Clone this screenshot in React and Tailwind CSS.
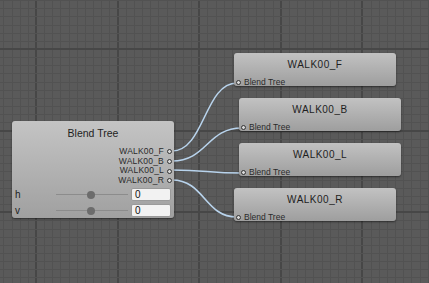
import React from 'react';

const W = 429;
const H = 283;
const STEP = 8.16;

const Grid = () => {
  const lines = [];
  for (let k = -5; k * STEP + 36 < W + 10; k++) {
    const x = Math.round(36 + k * STEP);
    const major = ((k % 10) + 10) % 10 === 0;
    lines.push(<rect key={'v' + k} x={major ? x - 1 : x} y={0} width={major ? 2 : 1} height={H} fill={major ? '#474747' : '#525252'} />);
  }
  for (let k = -7; k * STEP + 49 < H + 10; k++) {
    const y = Math.round(49 + k * STEP);
    const major = ((k % 10) + 10) % 10 === 0;
    lines.push(<rect key={'h' + k} x={0} y={major ? y - 1 : y} width={W} height={major ? 2 : 1} fill={major ? '#474747' : '#525252'} />);
  }
  return lines;
};

const edges = [
  [172, 151, 237, 83],
  [172, 161, 242, 128],
  [172, 170, 242, 173],
  [172, 180, 237, 217],
];

const Port = () => (
  <span className="inline-block w-[5px] h-[5px] rounded-full border border-[#333] bg-[#d8d8d8]" />
);

const ClipNode = ({ name, left, top }) => (
  <div
    className="absolute w-[162px] h-[33px] rounded-[3px] bg-gradient-to-b from-[#c2c2c2] to-[#9e9e9e] shadow-[0_1px_2px_rgba(0,0,0,0.5)] flex flex-col"
    style={{ left, top }}
  >
    <div className="h-[22px] flex items-center justify-center text-[10px] tracking-[0.5px] text-[#1e1e1e]">{name}</div>
    <div className="mt-auto flex items-center gap-[3px] pl-[2px] text-[8.5px] leading-[8px] text-[#2a2a2a]">
      <Port />
      <span>Blend Tree</span>
    </div>
  </div>
);

const Param = ({ label, top }) => (
  <div className="flex items-center h-[14px]" style={{ marginTop: top }}>
    <span className="w-[44px] pl-[3px] text-[10px] text-[#1e1e1e]">{label}</span>
    <div className="relative w-[72px] h-[14px] flex items-center">
      <div className="w-full h-px bg-[#8c8c8c]" />
      <div className="absolute left-[31px] top-[3px] w-[8px] h-[8px] rounded-full bg-[#6c6c6c]" />
    </div>
    <div className="ml-[3px] w-[40px] h-[13px] bg-[#f2f2f2] border border-[#9a9a9a] rounded-[2px] text-[10px] leading-[11px] pl-[3px] text-[#111]">0</div>
  </div>
);

export default function App() {
  return (
    <div className="relative w-[429px] h-[283px] overflow-hidden bg-[#5a5a5a]" style={{ fontFamily: '"Liberation Sans", Arial, sans-serif' }}>
      <svg className="absolute inset-0" width={W} height={H}>
        <Grid />
        {edges.map(([x1, y1, x2, y2], i) => {
          const d = (x2 - x1) * 0.5;
          return (
            <path
              key={i}
              d={`M${x1} ${y1} C${x1 + d} ${y1} ${x2 - d} ${y2} ${x2} ${y2}`}
              fill="none"
              stroke="#b8d3ec"
              strokeWidth="1.6"
            />
          );
        })}
      </svg>

      <div className="absolute left-[12px] top-[121px] w-[162px] h-[97px] rounded-[3px] bg-gradient-to-b from-[#c4c4c4] to-[#a0a0a0] shadow-[0_1px_2px_rgba(0,0,0,0.5)] flex flex-col">
        <div className="h-[25px] flex items-center justify-center text-[10.5px] text-[#1e1e1e] pt-[1px]">Blend Tree</div>
        <div className="flex flex-col items-end pr-[2px] mt-[1px]">
          {['WALK00_F', 'WALK00_B', 'WALK00_L', 'WALK00_R'].map((p) => (
            <div key={p} className="flex items-center gap-[3px] h-[9.7px] leading-[9.7px] text-[8.5px] tracking-[0.2px] text-[#2a2a2a]">
              <span>{p}</span>
              <Port />
            </div>
          ))}
        </div>
        <Param label="h" top="2px" />
        <Param label="v" top="2px" />
      </div>

      <ClipNode name="WALK00_F" left={234} top={53} />
      <ClipNode name="WALK00_B" left={239} top={98} />
      <ClipNode name="WALK00_L" left={239} top={143} />
      <ClipNode name="WALK00_R" left={234} top={188} />
    </div>
  );
}
